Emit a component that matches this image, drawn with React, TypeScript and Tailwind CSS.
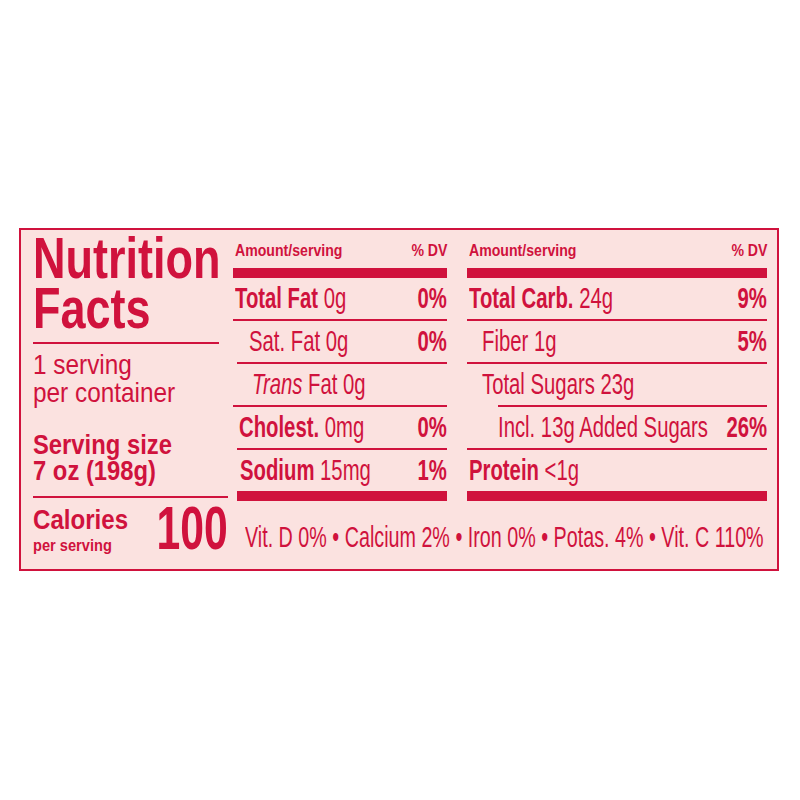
import React from 'react';

const red = 'text-[#d0123d]';

// Condensed text: the narrow face is not installed, so squeeze Liberation Sans horizontally
function Sq({
  s = 'scale-x-[0.7]',
  right,
  className = '',
  children,
}: {
  s?: string;
  right?: boolean;
  className?: string;
  children: React.ReactNode;
}) {
  return (
    <span className={`inline-block whitespace-nowrap ${right ? 'origin-right' : 'origin-left'} ${s} ${className}`}>
      {children}
    </span>
  );
}

type RowProps = {
  label: React.ReactNode;
  dv?: string;
  indent?: string;
  line?: string;
  size?: string;
  last?: boolean;
};

function Row({ label, dv, indent = 'pl-[2px]', line = 'ml-0', size = 'text-[29px]', last }: RowProps) {
  return (
    <div className="flex flex-col">
      <div className={`h-[41px] flex items-end pb-[6px] leading-none ${indent}`}>
        <div className="flex-1 min-w-0">
          <Sq className={size}>{label}</Sq>
        </div>
        {dv && (
          <Sq right className="text-[29px] font-bold shrink-0">
            {dv}
          </Sq>
        )}
      </div>
      {!last && <div className={`h-[2px] bg-[#d0123d] ${line}`} />}
    </div>
  );
}

function Header() {
  return (
    <div className="h-[38px] flex items-end pb-[9px] text-[17px] font-bold leading-none pl-[2px]">
      <div className="flex-1 min-w-0">
        <Sq s="scale-x-[0.83]">Amount/serving</Sq>
      </div>
      <Sq s="scale-x-[0.83]" right className="shrink-0">
        % DV
      </Sq>
    </div>
  );
}

export default function App() {
  return (
    <div className="min-h-screen bg-white pt-[228px] pl-[19px] font-['Liberation_Sans',Arial,sans-serif]">
      <div className={`w-[760px] h-[343px] border-2 border-[#d0123d] bg-[#fbe2e0] flex ${red}`}>
        {/* Left column */}
        <div className="w-[212px] min-w-0 shrink-0 pl-[12px] pr-[5px] flex flex-col">
          <h1 className="text-[57px] leading-[50px] font-bold pt-[3px]">
            <Sq s="scale-x-[0.79]">Nutrition</Sq>
            <br />
            <Sq s="scale-x-[0.79]">Facts</Sq>
          </h1>
          <div className="mt-[9px] h-[2px] w-[186px] bg-[#d0123d]" />
          <p className="text-[28px] leading-[28px] mt-[7px]">
            <Sq s="scale-x-[0.87]">1 serving</Sq>
            <br />
            <Sq s="scale-x-[0.87]">per container</Sq>
          </p>
          <p className="text-[28px] leading-[26px] font-bold mt-[25px]">
            <Sq s="scale-x-[0.85]">Serving size</Sq>
            <br />
            <Sq s="scale-x-[0.85]">7 oz (198g)</Sq>
          </p>
          <div className="mt-[12px] h-[2px] bg-[#d0123d]" />
          <div className="flex items-start mt-[8px]">
            <div className="flex-1 min-w-0 font-bold leading-none">
              <div className="text-[28px]">
                <Sq s="scale-x-[0.86]">Calories</Sq>
              </div>
              <div className="text-[17px] mt-[3px]">
                <Sq s="scale-x-[0.86]">per serving</Sq>
              </div>
            </div>
            <div className="shrink-0 text-[61px] font-bold leading-none -mt-[8px]">
              <Sq s="scale-x-[0.7]" right>
                100
              </Sq>
            </div>
          </div>
        </div>

        {/* Amounts */}
        <div className="flex-1 min-w-0 flex flex-col pr-[10px]">
          <div className="flex gap-[20px]">
            {/* Middle column */}
            <div className="w-[214px] shrink-0 flex flex-col">
              <Header />
              <div className="h-[10px] bg-[#d0123d]" />
              <Row label={<><b>Total Fat</b> 0g</>} dv="0%" />
              <Row label="Sat. Fat 0g" dv="0%" indent="pl-[16px]" line="ml-[4px]" />
              <Row label={<><i>Trans</i> Fat 0g</>} indent="pl-[19px]" />
              <Row label={<><b>Cholest.</b> 0mg</>} dv="0%" indent="pl-[6px]" line="ml-[4px]" />
              <Row label={<><b>Sodium</b> 15mg</>} dv="1%" indent="pl-[7px]" last />
              <div className="h-[10px] bg-[#d0123d] ml-[4px]" />
            </div>

            {/* Right column */}
            <div className="flex-1 min-w-0 flex flex-col">
              <Header />
              <div className="h-[10px] bg-[#d0123d]" />
              <Row label={<><b>Total Carb.</b> 24g</>} dv="9%" />
              <Row label="Fiber 1g" dv="5%" indent="pl-[15px]" />
              <Row label="Total Sugars 23g" indent="pl-[15px]" line="ml-[31px]" />
              <Row label="Incl. 13g Added Sugars" dv="26%" indent="pl-[31px]" />
              <Row label={<><b>Protein</b> &lt;1g</>} last />
              <div className="h-[10px] bg-[#d0123d]" />
            </div>
          </div>

          <div className="flex-1 flex items-end pb-[17px] pl-[12px] text-[29px] leading-none">
            <Sq s="scale-x-[0.68]">Vit. D 0% • Calcium 2% • Iron 0% • Potas. 4% • Vit. C 110%</Sq>
          </div>
        </div>
      </div>
    </div>
  );
}
